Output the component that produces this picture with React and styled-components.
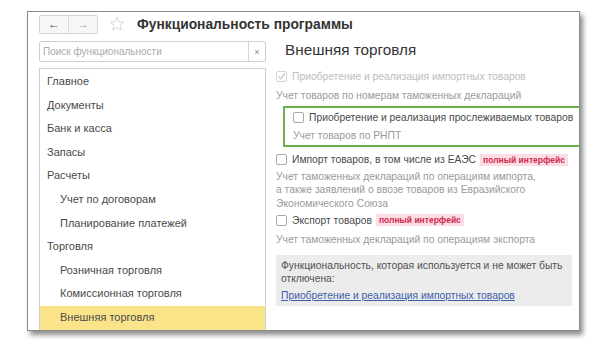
import styled, { createGlobalStyle } from "styled-components";

const GlobalStyle = createGlobalStyle`
  html, body {
    margin: 0;
    padding: 0;
    background: #ffffff;
  }
  body {
    font-family: "Liberation Sans", Arial, sans-serif;
    color: #444;
  }
`;

const Page = styled.div`
  width: 608px;
  height: 348px;
  padding: 11px 0 0 27px;
  box-sizing: border-box;
`;

const Window = styled.div`
  width: 553px;
  height: 320px;
  box-sizing: border-box;
  border: 1px solid #8c8c8c;
  background: #fff;
  box-shadow: 3px 4px 5px rgba(0, 0, 0, 0.45);
  padding: 2px 0 0 11px;
  display: flex;
  flex-direction: column;
  overflow: hidden;
  white-space: nowrap;
`;

const TitleBar = styled.div`
  display: flex;
  align-items: center;
  height: 20px;
`;

const NavGroup = styled.div`
  display: flex;
  width: 59px;
  height: 19px;
  box-sizing: border-box;
  border: 1px solid #d2d2d2;
  border-radius: 2px;
  background: #f7f7f7;
`;

const NavButton = styled.div`
  flex: 1;
  display: flex;
  align-items: center;
  justify-content: center;
  font-size: 12px;
  font-weight: bold;
  color: ${(p) => (p.dim ? "#aaa" : "#555")};
  & + & {
    border-left: 1px solid #dcdcdc;
  }
`;

const Star = styled.svg`
  margin-left: 11px;
  width: 16px;
  height: 16px;
`;

const Title = styled.div`
  margin-left: 12px;
  font-size: 13.8px;
  font-weight: bold;
  color: #333;
`;

const Body = styled.div`
  flex: 1;
  display: flex;
  margin-top: 7px;
  min-height: 0;
`;

const LeftColumn = styled.div`
  width: 227px;
  display: flex;
  flex-direction: column;
`;

const Search = styled.div`
  height: 21px;
  box-sizing: border-box;
  border: 1px solid #cfcfcf;
  border-radius: 2px;
  display: flex;
`;

const SearchText = styled.div`
  flex: 1;
  padding-left: 3px;
  font-size: 10px;
  line-height: 19px;
  color: #aaa;
`;

const ClearButton = styled.div`
  width: 16px;
  border-left: 1px solid #d6d6d6;
  display: flex;
  align-items: center;
  justify-content: center;
  font-size: 9px;
  color: #888;
`;

const List = styled.div`
  flex: 1;
  margin-top: 6px;
  border: 1px solid #cfcfcf;
  border-bottom: none;
  padding-top: 1px;
`;

const ListItem = styled.div`
  height: 23.6px;
  line-height: 23.6px;
  padding-left: ${(p) => (p.nested ? 20 : 7)}px;
  font-size: 11px;
  color: #4a4a4a;
  background: ${(p) => (p.active ? "#fbe38a" : "transparent")};
`;

const RightColumn = styled.div`
  flex: 1;
  margin-left: 10px;
  display: flex;
  flex-direction: column;
`;

const Heading = styled.div`
  padding-left: 9px;
  font-size: 15.3px;
  line-height: 17px;
  color: #333;
`;

const CheckRow = styled.div`
  display: flex;
  align-items: center;
  height: 14px;
  margin-top: ${(p) => p.top || 0}px;
  padding-left: ${(p) => p.indent || 0}px;
`;

const Box = styled.div`
  width: 11px;
  height: 11px;
  flex-shrink: 0;
  box-sizing: border-box;
  border: 1px solid ${(p) => (p.disabled ? "#d4d4d4" : "#a8a8a8")};
  border-radius: 2px;
  background: #fff;
  display: flex;
  align-items: center;
  justify-content: center;
`;

const Label = styled.span`
  margin-left: 5px;
  font-size: 10.3px;
  color: ${(p) => (p.disabled ? "#bdbdbd" : "#4a4a4a")};
`;

const Badge = styled.span`
  margin-left: 4px;
  padding: 1px 3px;
  background: #fbdde4;
  color: #d1284f;
  font-size: 8.5px;
  font-weight: bold;
`;

const Hint = styled.div`
  font-size: 10.3px;
  line-height: 13.5px;
  color: #9a9a9a;
  margin-top: ${(p) => p.top || 0}px;
  padding-left: ${(p) => p.indent || 0}px;
`;

const Highlight = styled.div`
  margin-top: 3px;
  margin-left: 7px;
  height: 41px;
  box-sizing: border-box;
  border: 2px solid #6ab04c;
  border-right: none;
  padding-top: 3px;
`;

const Note = styled.div`
  margin-top: 8px;
  width: 296px;
  height: 51px;
  box-sizing: border-box;
  background: #ececec;
  padding: 4px 0 0 5px;
  font-size: 10.3px;
  line-height: 13px;
  color: #505050;
`;

const Link = styled.a`
  display: block;
  margin-top: 4px;
  color: #3d5fa8;
  text-decoration: underline;
`;

function Check({ checked, disabled }) {
  return (
    <Box disabled={disabled}>
      {checked && (
        <svg width="9" height="9" viewBox="0 0 9 9">
          <path d="M1.5 4.5 L3.7 6.8 L8 1.5" fill="none" stroke="#c8c8c8" strokeWidth="1.3" />
        </svg>
      )}
    </Box>
  );
}

const items = [
  { label: "Главное" },
  { label: "Документы" },
  { label: "Банк и касса" },
  { label: "Запасы" },
  { label: "Расчеты" },
  { label: "Учет по договорам", nested: true },
  { label: "Планирование платежей", nested: true },
  { label: "Торговля" },
  { label: "Розничная торговля", nested: true },
  { label: "Комиссионная торговля", nested: true },
  { label: "Внешняя торговля", nested: true, active: true },
];

export default function App() {
  return (
    <>
      <GlobalStyle />
      <Page>
        <Window>
          <TitleBar>
            <NavGroup>
              <NavButton>&#8592;</NavButton>
              <NavButton dim>&#8594;</NavButton>
            </NavGroup>
            <Star viewBox="0 0 16 16">
              <path
                d="M8 1.2 L9.9 5.9 L14.8 6.2 L11 9.3 L12.3 14.2 L8 11.5 L3.7 14.2 L5 9.3 L1.2 6.2 L6.1 5.9 Z"
                fill="none"
                stroke="#d6d6d6"
                strokeWidth="1"
              />
            </Star>
            <Title>Функциональность программы</Title>
          </TitleBar>
          <Body>
            <LeftColumn>
              <Search>
                <SearchText>Поиск функциональности</SearchText>
                <ClearButton>&#215;</ClearButton>
              </Search>
              <List>
                {items.map((it) => (
                  <ListItem key={it.label} nested={it.nested} active={it.active}>
                    {it.label}
                  </ListItem>
                ))}
              </List>
            </LeftColumn>
            <RightColumn>
              <Heading>Внешняя торговля</Heading>
              <CheckRow top={11}>
                <Check checked disabled />
                <Label disabled>Приобретение и реализация импортных товаров</Label>
              </CheckRow>
              <Hint top={6}>Учет товаров по номерам таможенных деклараций</Hint>
              <Highlight>
                <CheckRow indent={8}>
                  <Check />
                  <Label>Приобретение и реализация прослеживаемых товаров</Label>
                </CheckRow>
                <Hint top={4} indent={8}>
                  Учет товаров по РНПТ
                </Hint>
              </Highlight>
              <CheckRow top={6}>
                <Check />
                <Label>Импорт товаров, в том числе из ЕАЭС</Label>
                <Badge>полный интерфейс</Badge>
              </CheckRow>
              <Hint top={3}>
                Учет таможенных деклараций по операциям импорта,
                <br />
                а также заявлений о ввозе товаров из Евразийского
                <br />
                Экономического Союза
              </Hint>
              <CheckRow top={3}>
                <Check />
                <Label>Экспорт товаров</Label>
                <Badge>полный интерфейс</Badge>
              </CheckRow>
              <Hint top={6}>Учет таможенных деклараций по операциям экспорта</Hint>
              <Note>
                Функциональность, которая используется и не может быть
                <br />
                отключена:
                <Link href="#">Приобретение и реализация импортных товаров</Link>
              </Note>
            </RightColumn>
          </Body>
        </Window>
      </Page>
    </>
  );
}
